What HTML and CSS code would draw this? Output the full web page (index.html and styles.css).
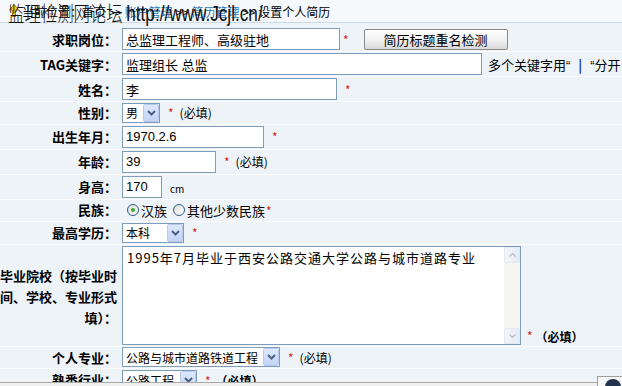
FILE: index.html
```html
<!DOCTYPE html>
<html lang="zh-CN">
<head>
  <meta charset="UTF-8">
  <title>设置个人简历</title>
  <link rel="stylesheet" href="styles.css">
</head>
<body>
<div class="crumb">
  <svg class="upIcon" width="10" height="13" viewBox="0 0 10 13">
    <path d="M5 0.5 L9.5 6 L6.5 6 L6.5 12.5 L3.5 12.5 L3.5 6 L0.5 6 Z" fill="#f5c21b" stroke="#b07a00" stroke-width="1"/>
  </svg>
  <span class="crumbText">当前位置：首页 &gt;&gt; <a href="#">账户管理</a> &gt;&gt; <a href="#">简历管理</a> &gt;&gt; 设置个人简历</span>
  <span class="mark">监理检测网论坛 <span class="markUrl">http://www.Jcjl.cn/</span></span>
</div>

<table class="form">
  <tr class="first">
    <td class="lab">求职岗位：</td>
    <td><input class="txt w218" type="text" value="总监理工程师、高级驻地"><span class="star">*</span><button class="btn" type="button">简历标题重名检测</button></td>
  </tr>
  <tr>
    <td class="lab">TAG关键字：</td>
    <td><input class="txt w360" type="text" value="监理组长 总监"><span class="tip">多个关键字用<span class="q">“</span><b class="bar">|</b><span class="q">“</span>分开</span></td>
  </tr>
  <tr>
    <td class="lab">姓名：</td>
    <td><input class="txt w215" type="text" value="李"><span class="star far">*</span></td>
  </tr>
  <tr class="sm">
    <td class="lab">性别：</td>
    <td><span class="sel w38"><select><option>男</option><option>女</option></select><span class="arrow"><svg width="9" height="6" viewBox="0 0 9 6"><path d="M1 1 L4.5 4.5 L8 1" fill="none" stroke="#4d6185" stroke-width="2"/></svg></span></span><span class="star far">*</span><span class="need">(必填)</span></td>
  </tr>
  <tr>
    <td class="lab">出生年月：</td>
    <td><input class="txt w142" type="text" value="1970.2.6"><span class="star far">*</span></td>
  </tr>
  <tr>
    <td class="lab">年龄：</td>
    <td><input class="txt w94" type="text" value="39"><span class="star far">*</span><span class="need">(必填)</span></td>
  </tr>
  <tr>
    <td class="lab">身高：</td>
    <td><input class="txt w40" type="text" value="170"><span class="unit">cm</span></td>
  </tr>
  <tr class="sm">
    <td class="lab">民族：</td>
    <td><label class="rad"><input type="radio" name="mz" checked>汉族</label><label class="rad"><input type="radio" name="mz">其他少数民族</label><span class="star near">*</span></td>
  </tr>
  <tr class="sm">
    <td class="lab">最高学历：</td>
    <td><span class="sel w62"><select><option>本科</option></select><span class="arrow"><svg width="9" height="6" viewBox="0 0 9 6"><path d="M1 1 L4.5 4.5 L8 1" fill="none" stroke="#4d6185" stroke-width="2"/></svg></span></span><span class="star far">*</span></td>
  </tr>
  <tr class="tall">
    <td class="lab">毕业院校（按毕业时间、学校、专业形式填）：</td>
    <td class="areaCell"><span class="areaWrap"><textarea class="area">1995年7月毕业于西安公路交通大学公路与城市道路专业</textarea><span class="scroll"><span class="sbtn"><svg width="7" height="4" viewBox="0 0 7 4"><path d="M0.5 3.5 L3.5 0.5 L6.5 3.5" fill="none" stroke="#b5bdc8" stroke-width="1.2"/></svg></span><span class="sbtn"><svg width="7" height="4" viewBox="0 0 7 4"><path d="M0.5 0.5 L3.5 3.5 L6.5 0.5" fill="none" stroke="#b5bdc8" stroke-width="1.2"/></svg></span></span></span><span class="star">*</span><b class="needB">（必填）</b></td>
  </tr>
  <tr class="sm">
    <td class="lab">个人专业：</td>
    <td><span class="sel w158"><select><option>公路与城市道路铁道工程</option></select><span class="arrow"><svg width="9" height="6" viewBox="0 0 9 6"><path d="M1 1 L4.5 4.5 L8 1" fill="none" stroke="#4d6185" stroke-width="2"/></svg></span></span><span class="star far">*</span><span class="need">(必填)</span></td>
  </tr>
  <tr class="sm">
    <td class="lab">熟悉行业：</td>
    <td><span class="sel w75"><select><option>公路工程</option></select><span class="arrow"><svg width="9" height="6" viewBox="0 0 9 6"><path d="M1 1 L4.5 4.5 L8 1" fill="none" stroke="#4d6185" stroke-width="2"/></svg></span></span><span class="star far">*</span><b class="needB">（必填）</b></td>
  </tr>
</table>

<div class="statusBar">
  <span class="dock"><span class="dot"></span></span>
</div>
</body>
</html>
```

FILE: styles.css
```css
*{
  margin: 0;
  padding: 0;
}
html,body{
  width: 100%;
  background-color: #eef3f8;
  font-family: "Noto Sans CJK SC", "Liberation Sans", sans-serif;
  font-size: 12px;
  color: #000;
  overflow: hidden;
}
/*面包屑*/
.crumb{
  position: relative;
  height: 22px;
  background-color: #f6f9fc;
  border-bottom: 1px solid #c9d8e7;
  display: flex;
  align-items: center;
  white-space: nowrap;
}
.upIcon{
  margin: 0 3px 2px 9px;
}
.crumbText{
  font-size: 12px;
  color: #000;
}
.crumbText a{
  color: #2f78b8;
  text-decoration: none;
}
/*水印*/
.mark{
  position: absolute;
  left: 8px;
  top: -3px;
  font-size: 21px;
  line-height: 30px;
  font-weight: 300;
  color: #111;
  transform: scaleX(0.78);
  transform-origin: left center;
}
.markUrl{
  font-family: "Liberation Sans", sans-serif;
  font-size: 22px;
  font-weight: normal;
}
/*表单*/
.form{
  width: 100%;
  border-collapse: collapse;
  table-layout: fixed;
}
.form td{
  border-bottom: 1px solid #fbfcfe;
  padding: 1px 0;
  height: 20px;
  white-space: nowrap;
  vertical-align: middle;
}
.form .first td{
  padding-top: 5px;
}
.form .sm td{
  padding: 0 0 1px;
}
.form td.lab{
  width: 117px;
  padding-right: 5px;
  text-align: right;
  font-weight: bold;
  font-size: 13px;
  white-space: normal;
}
.tall td.lab{
  line-height: 21px;
  padding-top: 4px;
}
.txt{
  height: 22px;
  box-sizing: border-box;
  border: 1px solid #7f9db9;
  background-color: #fff;
  padding: 0 3px;
  font-family: "Liberation Sans", "Noto Sans CJK SC", sans-serif;
  font-size: 13px;
  color: #000;
  vertical-align: middle;
  outline: none;
}
.w218{ width: 218px; }
.w360{ width: 360px; }
.w215{ width: 215px; }
.w142{ width: 142px; }
.w94{ width: 94px; }
.w40{ width: 40px; }
.star{
  color: #d81e1e;
  font-size: 12px;
  margin-left: 3px;
  vertical-align: middle;
}
.star.far{
  margin-left: 8px;
  margin-right: 2px;
}
.star.near{
  margin-left: 1px;
}
.need{
  margin-left: 4px;
  font-size: 12px;
  vertical-align: middle;
}
.needB{
  margin-left: 3px;
  font-size: 12px;
  vertical-align: middle;
}
.unit{
  margin-left: 8px;
  font-size: 10px;
  vertical-align: -3px;
}
.tip{
  margin-left: 6px;
  font-size: 13px;
  vertical-align: middle;
}
.tip .q{
  font-family: "Liberation Sans", sans-serif;
}
.bar{
  color: #1a2fb0;
  margin: 0 8px;
}
/*按钮*/
.btn{
  margin-left: 15px;
  width: 144px;
  height: 21px;
  border: 1px solid #8a8a8a;
  border-radius: 2px;
  background: linear-gradient(#ffffff, #f2f2f2 50%, #d9d9d9);
  font-family: "Noto Sans CJK SC", sans-serif;
  font-size: 13px;
  color: #000;
  vertical-align: middle;
}
/*下拉框*/
.sel{
  position: relative;
  display: inline-block;
  height: 20px;
  vertical-align: middle;
}
.sel select{
  appearance: none;
  -webkit-appearance: none;
  width: 100%;
  height: 20px;
  border: 1px solid #7f9db9;
  background-color: #fff;
  padding: 0 18px 0 3px;
  font-family: "Noto Sans CJK SC", sans-serif;
  font-size: 12px;
  color: #000;
  outline: none;
  display: block;
}
.sel .arrow{
  position: absolute;
  right: 1px;
  top: 1px;
  width: 16px;
  height: 18px;
  box-sizing: border-box;
  border: 1px solid #b7c9ee;
  border-radius: 2px;
  background: linear-gradient(#dfe9fd, #c2d3f7);
  display: flex;
  align-items: center;
  justify-content: center;
}
.w38{ width: 38px; }
.w62{ width: 62px; }
.w158{ width: 158px; }
.w75{ width: 75px; }
/*单选*/
.rad{
  display: inline-flex;
  align-items: center;
  margin-left: 5px;
  font-size: 13px;
  vertical-align: middle;
}
.rad + .rad{
  margin-left: 6px;
}
.rad input{
  appearance: none;
  -webkit-appearance: none;
  width: 12px;
  height: 12px;
  border: 1px solid #2c5c8a;
  border-radius: 50%;
  background: linear-gradient(135deg, #dcdcd5, #ffffff);
  margin-right: 2px;
  position: relative;
}
.rad input:checked::after{
  content: "";
  position: absolute;
  left: 3px;
  top: 3px;
  width: 4px;
  height: 4px;
  border-radius: 50%;
  background-color: #3fae2f;
}
/*多行文本*/
.areaCell{
  padding: 0;
}
.areaWrap{
  position: relative;
  display: inline-block;
  vertical-align: bottom;
}
.area{
  display: block;
  width: 399px;
  height: 99px;
  box-sizing: border-box;
  border: 1px solid #7f9db9;
  padding: 2px 20px 2px 4px;
  font-family: "Noto Sans CJK SC", sans-serif;
  font-size: 13px;
  letter-spacing: 1px;
  line-height: 18px;
  resize: none;
  overflow: hidden;
  outline: none;
}
/*假滚动条*/
.scroll{
  position: absolute;
  right: 1px;
  top: 1px;
  bottom: 1px;
  width: 16px;
  background-color: #f5f5f2;
  display: flex;
  flex-direction: column;
  justify-content: space-between;
}
.sbtn{
  height: 16px;
  box-sizing: border-box;
  border: 1px solid #e3e7ee;
  border-radius: 2px;
  background: linear-gradient(90deg, #f3f5f9, #e6ebf3);
  display: flex;
  align-items: center;
  justify-content: center;
}
.areaWrap + .star{
  margin-left: 6px;
  vertical-align: bottom;
  position: relative;
  top: -1px;
}
.areaWrap ~ .needB{
  vertical-align: bottom;
}
/*底部状态条*/
.statusBar{
  position: fixed;
  left: 0;
  right: 0;
  bottom: 0;
  height: 3px;
  background-color: #f0f0f0;
  border-top: 1px solid #a9a9a9;
}
.dock{
  position: absolute;
  right: 0;
  top: -7px;
  width: 24px;
  height: 12px;
  background-color: #f7f7f7;
  border: 1px solid #a0a0a0;
  border-right: none;
}
.dot{
  position: absolute;
  left: 7px;
  top: 2px;
  width: 16px;
  height: 16px;
  border-radius: 50%;
  background-color: #22344e;
}
```
